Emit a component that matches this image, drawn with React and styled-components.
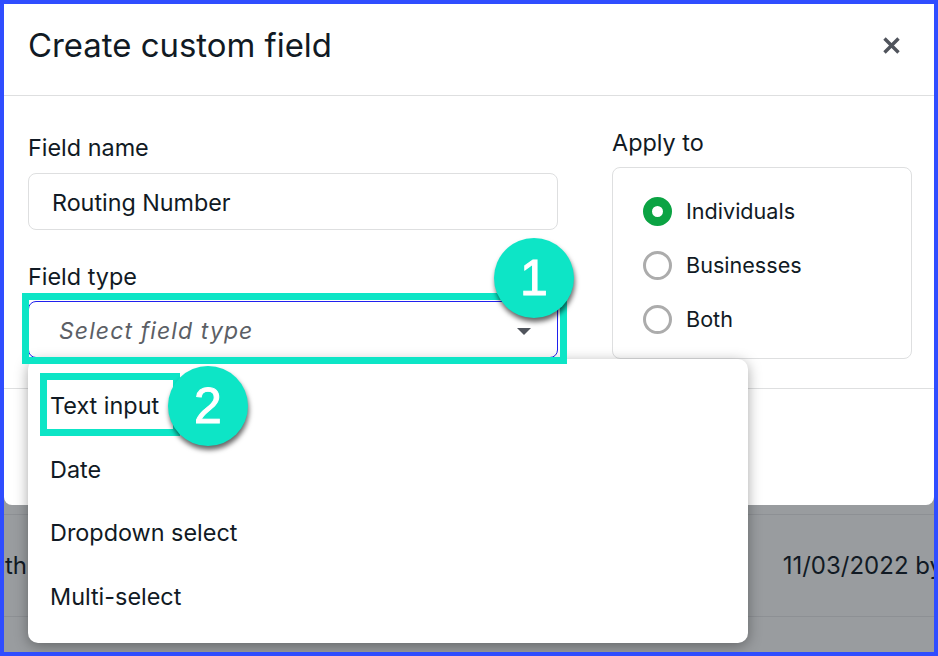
import React from 'react'
import styled, { createGlobalStyle } from 'styled-components'

const GlobalStyle = createGlobalStyle`
    html, body {
        margin: 0;
        padding: 0;
        background: #fff;
    }
    body {
        font-family: Inter, "Liberation Sans", sans-serif;
        color: #111a24;
    }
`

const Frame = styled.div`
    position: relative;
    box-sizing: border-box;
    width: 938px;
    height: 656px;
    border: 4px solid #2f4dff;
    background: #999c9f;
    overflow: hidden;
`

const Modal = styled.div`
    height: 501px;
    background: #fff;
    border-radius: 0 0 8px 8px;
`

const Header = styled.div`
    height: 92px;
    box-sizing: border-box;
    padding: 0 34px 9px 24px;
    display: flex;
    align-items: center;
    justify-content: space-between;
    border-bottom: 1px solid #dedfe0;
`

const Title = styled.h1`
    margin: 0;
    font-size: 32.9px;
    font-weight: 400;
    line-height: 40px;
`

const CloseIcon = styled.svg`
    width: 17px;
    height: 17px;
    color: #50545c;
`

const Body = styled.div`
    height: 293px;
    box-sizing: border-box;
    padding: 36px 22px 0 24px;
    display: flex;
    justify-content: space-between;
    border-bottom: 1px solid #dedfe0;
`

const LeftColumn = styled.div`
    width: 530px;
`

const RightColumn = styled.div`
    width: 300px;
    margin-top: -5px;
`

const Label = styled.div`
    font-size: 23.4px;
    line-height: 32px;
    margin-bottom: ${props => props.gap || 9}px;
`

const TextBox = styled.div`
    box-sizing: border-box;
    height: 57px;
    padding: 2px 23px 0;
    display: flex;
    align-items: center;
    justify-content: space-between;
    font-size: 23.3px;
    border-radius: 8px;
    border: 1px solid ${props => props.focused ? '#2020ee' : '#dedfe0'};
    margin-bottom: ${props => props.gap || 0}px;
`

const Placeholder = styled.span`
    font-style: italic;
    font-size: 23px;
    letter-spacing: 1.1px;
    color: #5c5f66;
    padding-left: 7px;
`

const Caret = styled.span`
    width: 0;
    height: 0;
    margin: 2px 3px 0 0;
    border-left: 7.5px solid transparent;
    border-right: 7.5px solid transparent;
    border-top: 7px solid #50545c;
`

const RadioCard = styled.div`
    box-sizing: border-box;
    height: 192px;
    padding: 16px 30px 0;
    border: 1px solid #dedfe0;
    border-radius: 8px;
    display: flex;
    flex-direction: column;
`

const RadioRow = styled.div`
    height: 54px;
    display: flex;
    align-items: center;
    gap: 14px;
    font-size: 21.6px;
`

const RadioDot = styled.span`
    box-sizing: border-box;
    width: 29px;
    height: 29px;
    border-radius: 50%;
    background: #fff;
    border: ${props => props.checked ? '9px solid #0ba343' : '3.5px solid #acacac'};
`

const Backdrop = styled.div`
    box-sizing: border-box;
    margin-top: 9px;
    display: flex;
    align-items: center;
    justify-content: space-between;
    border-top: 1px solid #8d9094;
    border-bottom: 1px solid #8d9094;
    height: 103px;
    font-size: 24px;
    white-space: nowrap;
    overflow: hidden;
`

const BackdropStart = styled.span`
    margin-left: 1px;
`

const BackdropEnd = styled.span`
    margin-right: -9px;
`

const Menu = styled.div`
    position: absolute;
    left: 24px;
    top: 355px;
    width: 720px;
    height: 284px;
    box-sizing: border-box;
    padding: 15px 22px;
    background: #fff;
    border-radius: 10px;
    box-shadow: 0 3px 14px rgba(0, 0, 0, 0.35);
`

const MenuItem = styled.div`
    height: 63.6px;
    display: flex;
    align-items: center;
    font-size: 23.4px;
`

const Highlight = styled.div`
    position: absolute;
    box-sizing: border-box;
    left: ${props => props.x}px;
    top: ${props => props.y}px;
    width: ${props => props.w}px;
    height: ${props => props.h}px;
    border: ${props => props.thick}px solid #0de5c6;
`

const Bubble = styled.div`
    position: absolute;
    left: ${props => props.x}px;
    top: ${props => props.y}px;
    width: 80px;
    height: 80px;
    border-radius: 50%;
    background: #0de5c6;
    color: #fff;
    display: flex;
    align-items: center;
    justify-content: center;
    font-family: "Liberation Sans", Arial, sans-serif;
    font-size: 50px;
    -webkit-text-stroke: 1px #fff;
    box-shadow: 1px 4px 5px rgba(0, 0, 0, 0.6);
`

const App = () => (
    <Frame>
        <GlobalStyle />
        <Modal>
            <Header>
                <Title>Create custom field</Title>
                <CloseIcon viewBox="0 0 17 17" fill="none" stroke="currentColor" strokeWidth="3.4">
                    <path d="M1.5 1.5 L15.5 15.5 M15.5 1.5 L1.5 15.5" />
                </CloseIcon>
            </Header>
            <Body>
                <LeftColumn>
                    <Label>Field name</Label>
                    <TextBox gap={31}>Routing Number</TextBox>
                    <Label gap={8}>Field type</Label>
                    <TextBox focused>
                        <Placeholder>Select field type</Placeholder>
                        <Caret />
                    </TextBox>
                </LeftColumn>
                <RightColumn>
                    <Label gap={8}>Apply to</Label>
                    <RadioCard>
                        <RadioRow><RadioDot checked />Individuals</RadioRow>
                        <RadioRow><RadioDot />Businesses</RadioRow>
                        <RadioRow><RadioDot />Both</RadioRow>
                    </RadioCard>
                </RightColumn>
            </Body>
        </Modal>
        <Backdrop>
            <BackdropStart>th</BackdropStart>
            <BackdropEnd>11/03/2022 by</BackdropEnd>
        </Backdrop>
        <Menu>
            <MenuItem>Text input</MenuItem>
            <MenuItem>Date</MenuItem>
            <MenuItem>Dropdown select</MenuItem>
            <MenuItem>Multi-select</MenuItem>
        </Menu>
        <Highlight x={18} y={289} w={545} h={71} thick={7} />
        <Highlight x={36} y={369} w={140} h={63} thick={7} />
        <Bubble x={490} y={234}>1</Bubble>
        <Bubble x={164} y={362}>2</Bubble>
    </Frame>
)

export default App
